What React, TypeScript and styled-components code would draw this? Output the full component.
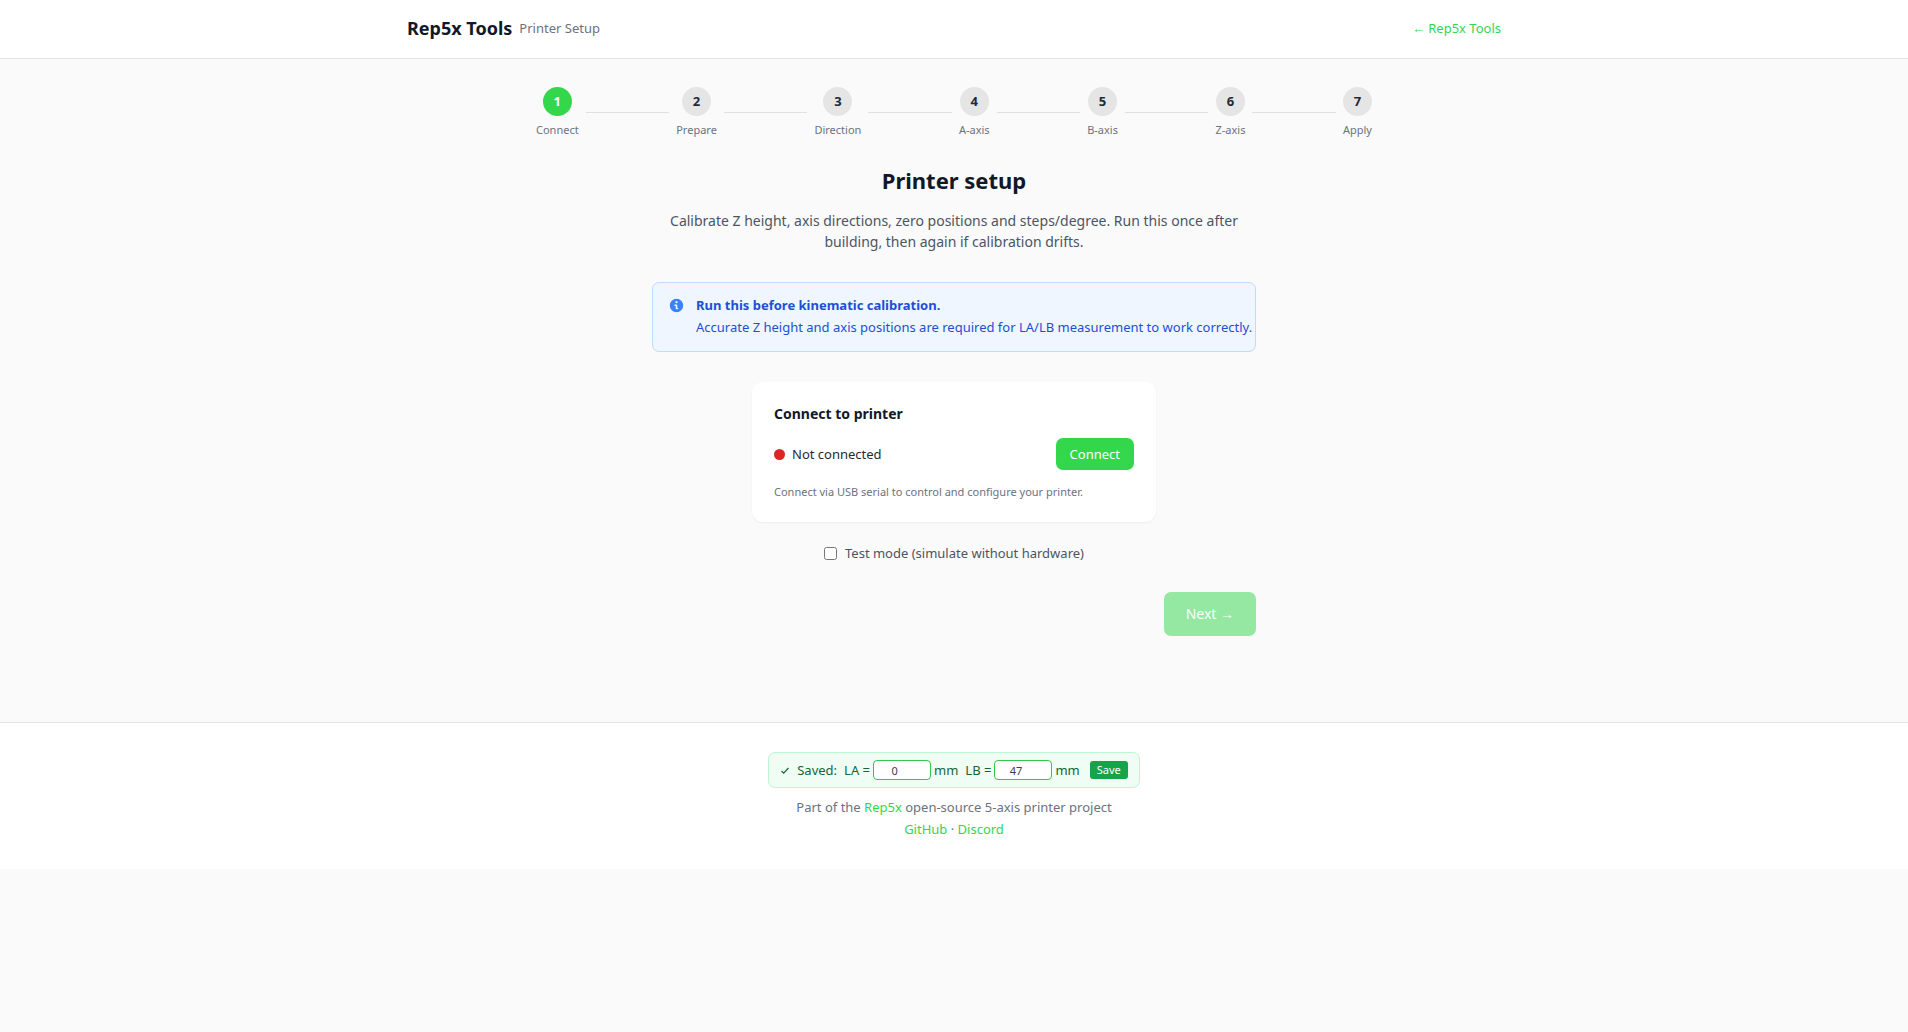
import React, { Fragment, useState } from "react";
import styled, { createGlobalStyle } from "styled-components";

const GlobalStyle = createGlobalStyle`
  *, *::before, *::after { box-sizing: border-box; }
  body {
    margin: 0;
    background: #fafafa;
    color: #1f2937;
    font-family: "Noto Sans", "Liberation Sans", sans-serif;
    font-size: 14px;
    line-height: 22px;
  }
  h1, h2, p, ol { margin: 0; padding: 0; }
  button, input { font-family: inherit; }
`;

const Header = styled.header`
  background: #fff;
  border-bottom: 1px solid #e5e5e5;
`;

const HeaderInner = styled.div`
  max-width: 1152px;
  margin: 0 auto;
  padding: 14px 29px 16px;
  display: flex;
  align-items: center;
  justify-content: space-between;
`;

const Brand = styled.div`
  display: flex;
  align-items: center;
  gap: 7px;
`;

const BrandName = styled.span`
  font-size: 18px;
  font-weight: 700;
  line-height: 28px;
  color: #111827;
`;

const BrandSection = styled.span`
  font-size: 13px;
  color: #6b7280;
`;

const Link = styled.a`
  font-size: 13px;
  color: #32d74b;
  text-decoration: none;
  &:hover { text-decoration: underline; }
`;

const Stepper = styled.nav`
  max-width: 864px;
  margin: 0 auto;
  padding: 28px 14px 0;
`;

const StepList = styled.ol`
  display: flex;
  align-items: center;
  list-style: none;
`;

const Step = styled.li`
  display: flex;
  flex-direction: column;
  align-items: center;
  gap: 6px;
`;

const StepCircle = styled.span<{ $active: boolean }>`
  width: 29px;
  height: 29px;
  padding-bottom: 2px;
  border-radius: 50%;
  display: flex;
  align-items: center;
  justify-content: center;
  font-size: 13px;
  font-weight: 700;
  background: ${(p) => (p.$active ? "#32d74b" : "#e5e5e5")};
  color: ${(p) => (p.$active ? "#fff" : "#1f2937")};
`;

const StepLabel = styled.span`
  font-size: 11px;
  line-height: 16px;
  color: #6b7280;
`;

const StepLine = styled.li`
  flex: 1;
  height: 1px;
  margin: 0 7px;
  background: #e0e0e0;
`;

const Main = styled.main`
  max-width: 634px;
  margin: 0 auto;
  padding: 27px 15px 86px;
`;

const Title = styled.h1`
  font-size: 22px;
  line-height: 30px;
  font-weight: 700;
  text-align: center;
  color: #111827;
`;

const Lead = styled.p`
  margin-top: 15px;
  line-height: 21px;
  text-align: center;
  color: #4b5563;
`;

const Notice = styled.section`
  margin-top: 30px;
  padding: 11px 0 13px 16px;
  display: flex;
  gap: 12px;
  border: 1px solid #bfdbfe;
  border-radius: 7px;
  background: #eff6ff;
  color: #1d4ed8;
  font-size: 13px;
`;

const NoticeIcon = styled.svg`
  flex: none;
  width: 15px;
  height: 15px;
  margin-top: 4px;
`;

const Card = styled.section`
  max-width: 404px;
  margin: 30px auto 0;
  padding: 22px;
  border-radius: 11px;
  background: #fff;
  box-shadow: 0 1px 2px rgba(0, 0, 0, 0.05);
`;

const CardTitle = styled.h2`
  font-size: 14px;
  line-height: 20px;
  font-weight: 700;
  color: #111827;
`;

const StatusRow = styled.div`
  margin: 14px 0;
  display: flex;
  align-items: center;
  justify-content: space-between;
`;

const Status = styled.span`
  display: flex;
  align-items: center;
  gap: 7px;
  font-size: 13px;
`;

const StatusDot = styled.span`
  width: 11px;
  height: 11px;
  border-radius: 50%;
  background: #dc2626;
`;

const Button = styled.button<{ $large?: boolean }>`
  border: 0;
  border-radius: 7px;
  background: #32d74b;
  color: #fff;
  padding: ${(p) => (p.$large ? "11px 22px" : "5px 14px")};
  font-size: ${(p) => (p.$large ? "14px" : "13px")};
  line-height: 22px;
  cursor: pointer;
  &:disabled { opacity: 0.5; cursor: not-allowed; }
`;

const Hint = styled.p`
  font-size: 11px;
  line-height: 16px;
  color: #6b7280;
`;

const TestMode = styled.label`
  margin-top: 20px;
  display: flex;
  align-items: center;
  justify-content: center;
  gap: 8px;
  font-size: 13px;
  color: #4b5563;
`;

const Checkbox = styled.input`
  width: 13px;
  height: 13px;
  margin: 0;
`;

const Actions = styled.div`
  margin-top: 28px;
  display: flex;
  justify-content: flex-end;
`;

const Footer = styled.footer`
  padding: 29px 15px;
  display: flex;
  flex-direction: column;
  align-items: center;
  border-top: 1px solid #e5e5e5;
  background: #fff;
  color: #6b7280;
  font-size: 13px;
`;

const SavedBar = styled.form`
  margin-bottom: 8px;
  padding: 6px 11px;
  display: flex;
  align-items: center;
  gap: 7px;
  border: 1px solid #bbf7d0;
  border-radius: 7px;
  background: #f0fdf4;
  color: #166534;
`;

const Tick = styled.svg`
  flex: none;
  width: 10px;
  height: 10px;
`;

const Field = styled.label`
  display: flex;
  align-items: center;
  gap: 3px;
`;

const FieldInput = styled.input`
  width: 58px;
  height: 20px;
  padding: 0 4px;
  border: 1px solid #32c850;
  border-radius: 4px;
  background: #fff;
  color: #374151;
  font-size: 11px;
  text-align: center;
`;

const SaveButton = styled.button`
  margin-left: 3px;
  padding: 1px 7px;
  border: 0;
  border-radius: 3px;
  background: #16a34a;
  color: #fff;
  font-size: 11px;
  line-height: 16px;
  cursor: pointer;
`;

const steps = ["Connect", "Prepare", "Direction", "A-axis", "B-axis", "Z-axis", "Apply"];

export default function App() {
  const [testMode, setTestMode] = useState(false);
  const [la, setLa] = useState("0");
  const [lb, setLb] = useState("47");

  return (
    <>
      <GlobalStyle />
      <Header>
        <HeaderInner>
          <Brand>
            <BrandName>Rep5x Tools</BrandName>
            <BrandSection>Printer Setup</BrandSection>
          </Brand>
          <Link href="#tools">← Rep5x Tools</Link>
        </HeaderInner>
      </Header>

      <Stepper aria-label="Setup steps">
        <StepList>
          {steps.map((label, i) => (
            <Fragment key={label}>
              {i > 0 && <StepLine aria-hidden="true" />}
              <Step aria-current={i === 0 ? "step" : undefined}>
                <StepCircle $active={i === 0}>{i + 1}</StepCircle>
                <StepLabel>{label}</StepLabel>
              </Step>
            </Fragment>
          ))}
        </StepList>
      </Stepper>

      <Main>
        <Title>Printer setup</Title>
        <Lead>
          Calibrate Z height, axis directions, zero positions and steps/degree. Run this once after
          building, then again if calibration drifts.
        </Lead>

        <Notice>
          <NoticeIcon viewBox="0 0 20 20" aria-hidden="true">
            <path
              fill="#3b82f6"
              fillRule="evenodd"
              clipRule="evenodd"
              d="M19 10a9 9 0 1 1-18 0 9 9 0 0 1 18 0zM11.5 5.5a1.5 1.5 0 1 1-3 0 1.5 1.5 0 0 1 3 0zM8 8.500a1 1 0 0 0 0 2h1v3.500a1 1 0 0 0 1 1h1.300a1 1 0 0 0 0-2H11v-3.500a1 1 0 0 0-1-1H8z"
            />
          </NoticeIcon>
          <div>
            <strong>Run this before kinematic calibration.</strong>
            <p>Accurate Z height and axis positions are required for LA/LB measurement to work correctly.</p>
          </div>
        </Notice>

        <Card>
          <CardTitle>Connect to printer</CardTitle>
          <StatusRow>
            <Status>
              <StatusDot />
              Not connected
            </Status>
            <Button type="button">Connect</Button>
          </StatusRow>
          <Hint>Connect via USB serial to control and configure your printer.</Hint>
        </Card>

        <TestMode>
          <Checkbox type="checkbox" checked={testMode} onChange={(e) => setTestMode(e.target.checked)} />
          Test mode (simulate without hardware)
        </TestMode>

        <Actions>
          <Button type="button" $large disabled={!testMode}>
            Next →
          </Button>
        </Actions>
      </Main>

      <Footer>
        <SavedBar onSubmit={(e) => e.preventDefault()}>
          <Tick viewBox="0 0 10 10" aria-hidden="true">
            <path d="M1.500 6l2.200 2.200L8.500 3" fill="none" stroke="currentColor" strokeWidth="1.200" />
          </Tick>
          <span>Saved:</span>
          <Field>
            LA =
            <FieldInput type="number" value={la} onChange={(e) => setLa(e.target.value)} />
            mm
          </Field>
          <Field>
            LB =
            <FieldInput type="number" value={lb} onChange={(e) => setLb(e.target.value)} />
            mm
          </Field>
          <SaveButton type="submit">Save</SaveButton>
        </SavedBar>
        <p>
          Part of the <Link href="#rep5x">Rep5x</Link> open-source 5-axis printer project
        </p>
        <p>
          <Link href="#github">GitHub</Link> · <Link href="#discord">Discord</Link>
        </p>
      </Footer>
    </>
  );
}
